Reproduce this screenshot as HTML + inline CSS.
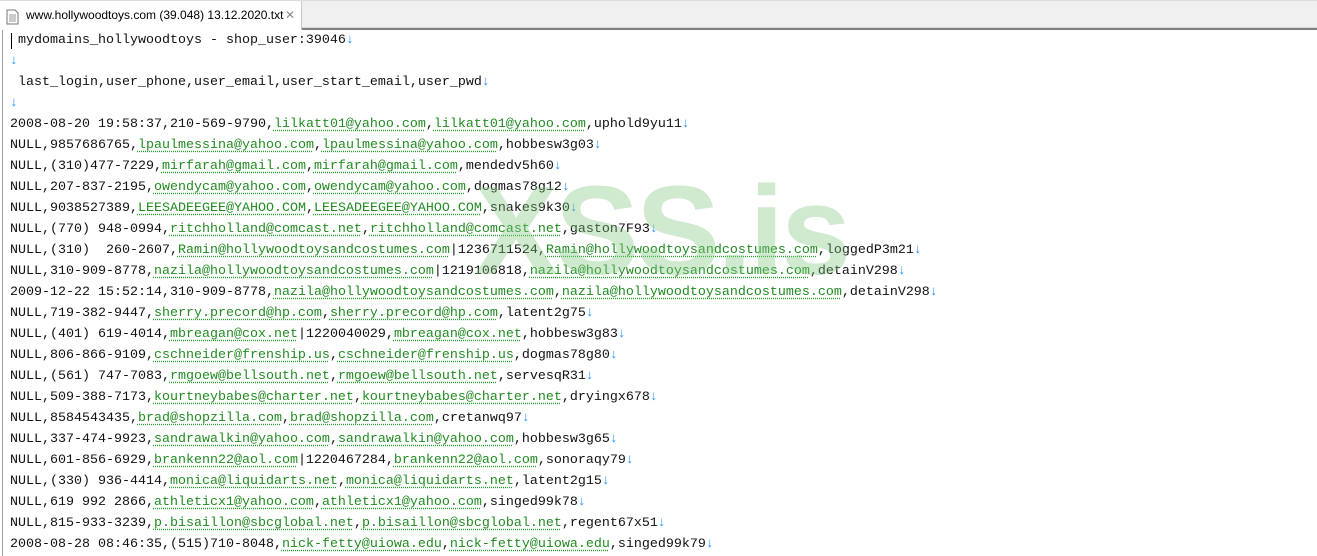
<!DOCTYPE html>
<html><head><meta charset="utf-8"><style>
html,body{margin:0;padding:0;width:1317px;height:556px;overflow:hidden;background:#fff;position:relative}
.bar{position:absolute;left:0;top:0;width:1317px;height:28px;background:#f0f0f0;border-top:1px solid #dcdcdc;border-bottom:1px solid #d8d8d8;box-sizing:border-box}
.line{position:absolute;left:0;top:28px;width:1317px;height:2px;background:#808080}
.tab{position:absolute;left:0;top:1px;width:301px;height:29px;background:#fff;border-right:1px solid #c8c8c8;font-family:"Liberation Sans",sans-serif;font-size:12px;color:#000}
.tab span{position:absolute;left:26px;top:7px}
.tab .x{position:absolute;left:285px;top:7px;color:#888;font-size:12px}
.doc{position:absolute;left:6px;top:8px}
.lb{position:absolute;left:2px;top:30px;width:1px;height:526px;background:#a0a0a0}
pre{position:absolute;left:10px;top:30px;margin:0;font-family:"Liberation Mono",monospace;font-size:13.33px;line-height:21px;color:#111}
i{font-style:normal;color:#1e90ff}
b{font-weight:normal;color:#228b22;text-decoration:underline dotted #22a022;text-underline-offset:3px}
.cur{position:absolute;left:11px;top:33px;width:1px;height:16px;background:#000}
.wm{position:absolute;left:474px;top:158px;font-family:"Liberation Sans",sans-serif;font-weight:bold;font-size:126px;color:rgba(130,200,130,0.38);letter-spacing:-3px}
</style></head><body>
<div class="bar"></div><div class="line"></div>
<div class="tab"><svg class="doc" width="13" height="16" viewBox="0 0 13 16"><path d="M1 1h8l3 3v11H1z" fill="#fff" stroke="#777"/><path d="M3 6h7M3 8h7M3 10h7M3 12h7" stroke="#999"/></svg><span>www.hollywoodtoys.com (39.048) 13.12.2020.txt</span><span class="x">✕</span></div>
<div class="lb"></div><div class="cur"></div>
<pre> mydomains_hollywoodtoys - shop_user:39046<i>↓</i>
<i>↓</i>
 last_login,user_phone,user_email,user_start_email,user_pwd<i>↓</i>
<i>↓</i>
2008-08-20 19:58:37,210-569-9790,<b>lilkatt01@yahoo.com</b>,<b>lilkatt01@yahoo.com</b>,uphold9yu11<i>↓</i>
NULL,9857686765,<b>lpaulmessina@yahoo.com</b>,<b>lpaulmessina@yahoo.com</b>,hobbesw3g03<i>↓</i>
NULL,(310)477-7229,<b>mirfarah@gmail.com</b>,<b>mirfarah@gmail.com</b>,mendedv5h60<i>↓</i>
NULL,207-837-2195,<b>owendycam@yahoo.com</b>,<b>owendycam@yahoo.com</b>,dogmas78g12<i>↓</i>
NULL,9038527389,<b>LEESADEEGEE@YAHOO.COM</b>,<b>LEESADEEGEE@YAHOO.COM</b>,snakes9k30<i>↓</i>
NULL,(770) 948-0994,<b>ritchholland@comcast.net</b>,<b>ritchholland@comcast.net</b>,gaston7F93<i>↓</i>
NULL,(310)  260-2607,<b>Ramin@hollywoodtoysandcostumes.com</b>|1236711524,<b>Ramin@hollywoodtoysandcostumes.com</b>,loggedP3m21<i>↓</i>
NULL,310-909-8778,<b>nazila@hollywoodtoysandcostumes.com</b>|1219106818,<b>nazila@hollywoodtoysandcostumes.com</b>,detainV298<i>↓</i>
2009-12-22 15:52:14,310-909-8778,<b>nazila@hollywoodtoysandcostumes.com</b>,<b>nazila@hollywoodtoysandcostumes.com</b>,detainV298<i>↓</i>
NULL,719-382-9447,<b>sherry.precord@hp.com</b>,<b>sherry.precord@hp.com</b>,latent2g75<i>↓</i>
NULL,(401) 619-4014,<b>mbreagan@cox.net</b>|1220040029,<b>mbreagan@cox.net</b>,hobbesw3g83<i>↓</i>
NULL,806-866-9109,<b>cschneider@frenship.us</b>,<b>cschneider@frenship.us</b>,dogmas78g80<i>↓</i>
NULL,(561) 747-7083,<b>rmgoew@bellsouth.net</b>,<b>rmgoew@bellsouth.net</b>,servesqR31<i>↓</i>
NULL,509-388-7173,<b>kourtneybabes@charter.net</b>,<b>kourtneybabes@charter.net</b>,dryingx678<i>↓</i>
NULL,8584543435,<b>brad@shopzilla.com</b>,<b>brad@shopzilla.com</b>,cretanwq97<i>↓</i>
NULL,337-474-9923,<b>sandrawalkin@yahoo.com</b>,<b>sandrawalkin@yahoo.com</b>,hobbesw3g65<i>↓</i>
NULL,601-856-6929,<b>brankenn22@aol.com</b>|1220467284,<b>brankenn22@aol.com</b>,sonoraqy79<i>↓</i>
NULL,(330) 936-4414,<b>monica@liquidarts.net</b>,<b>monica@liquidarts.net</b>,latent2g15<i>↓</i>
NULL,619 992 2866,<b>athleticx1@yahoo.com</b>,<b>athleticx1@yahoo.com</b>,singed99k78<i>↓</i>
NULL,815-933-3239,<b>p.bisaillon@sbcglobal.net</b>,<b>p.bisaillon@sbcglobal.net</b>,regent67x51<i>↓</i>
2008-08-28 08:46:35,(515)710-8048,<b>nick-fetty@uiowa.edu</b>,<b>nick-fetty@uiowa.edu</b>,singed99k79<i>↓</i></pre>
<div class="wm">XSS.is</div>
</body></html>
